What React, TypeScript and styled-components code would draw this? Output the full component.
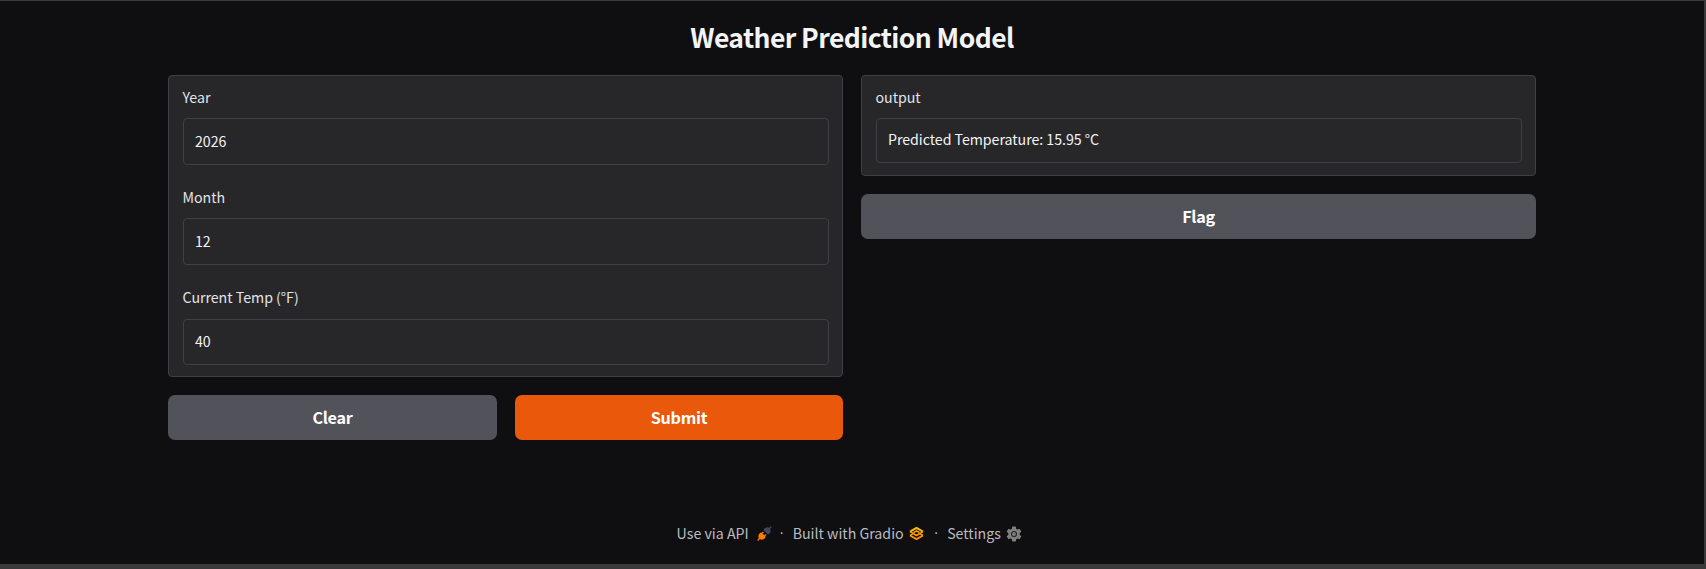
import React from "react";
import styled, { createGlobalStyle } from "styled-components";

const GlobalStyle = createGlobalStyle`
  *, *::before, *::after { box-sizing: border-box; }
  body {
    margin: 0;
    background: #0f0f11;
    color: #f4f4f5;
    font-family: "Noto Sans CJK SC", "Open Sans", sans-serif;
  }
  input, button { font-family: inherit; }
`;

const Page = styled.div`
  height: 569px;
  border: solid #3a3a3a;
  border-width: 1px 2px 5px 0;
  padding: 0 168px;
  display: flex;
  flex-direction: column;
`;

const Title = styled.h1`
  margin: 17px 0 19px;
  height: 38px;
  line-height: 38px;
  font-size: 26.5px;
  font-weight: 600;
  letter-spacing: -0.58px;
  text-align: center;
  color: #f4f4f5;
`;

const Columns = styled.main`
  display: grid;
  grid-template-columns: 675px 675px;
  gap: 18px;
  align-items: start;
`;

const Column = styled.section`
  display: flex;
  flex-direction: column;
  gap: 18px;
`;

const Panel = styled.div<{ $height: number }>`
  height: ${(p) => p.$height}px;
  padding: 10px 13px 0 14px;
  background: #27272a;
  border: 1px solid #3f3f46;
  border-radius: 4px;
`;

const Field = styled.label`
  display: flex;
  flex-direction: column;
  height: 100.2px;
`;

const FieldName = styled.span`
  height: 22px;
  margin: 0 0 10.2px -0.5px;
  line-height: 22px;
  font-size: 14.2px;
  letter-spacing: -0.02px;
  color: #e4e4e7;
`;

const TextInput = styled.input<{ $height: number; $lift?: number }>`
  width: 646px;
  height: ${(p) => p.$height}px;
  padding: 0 11px ${(p) => p.$lift ?? 1.2}px;
  background: #27272a;
  border: 1px solid #3f3f46;
  border-radius: 4px;
  color: #f4f4f5;
  font-size: 14.2px;
  letter-spacing: -0.04px;
  outline: none;
`;

const ButtonRow = styled.div`
  display: grid;
  grid-template-columns: 329px 328px;
  gap: 18px;
`;

const Button = styled.button<{ $primary?: boolean }>`
  height: 45px;
  padding: 0;
  border: 0;
  border-radius: 7px;
  background: ${(p) => (p.$primary ? "#ea580c" : "#52525b")};
  color: #fff;
  font-size: 16.2px;
  font-weight: 600;
  letter-spacing: -0.3px;
  line-height: 45px;
`;

const Footer = styled.footer`
  display: flex;
  justify-content: center;
  align-items: center;
  height: 24px;
  margin-top: 81px;
  margin-right: 5px;
  font-size: 14.2px;
  line-height: 24px;
  color: #bbbbc2;
`;

const FooterLink = styled.span<{ $gap: number }>`
  display: flex;
  align-items: center;
  gap: ${(p) => p.$gap}px;

  svg { position: relative; top: 0.5px; }
`;

const Dot = styled.span<{ $before: number }>`
  width: 4px;
  margin: 0 9px 0 ${(p) => p.$before}px;
  font-family: "Open Sans", sans-serif;
  text-align: center;
`;

const PlugIcon = () => (
  <svg width="15" height="15" viewBox="0 0 28 28">
    <path fill="#3f4758" d="M26.9425 2.94265C27.4632 2.42195 27.4632 1.57773 26.9425 1.05703C26.4218 0.536329 25.5776 0.536329 25.0569 1.05703L22.5713 3.54256C21.1213 2.59333 19.5367 2.43378 18.1753 2.64006C16.5495 2.88638 15.1127 3.66838 14.3905 4.39053L12.3905 6.39053C12.1405 6.64058 12 6.97972 12 7.33334C12 7.68697 12.1405 8.0261 12.3905 8.27615L19.7239 15.6095C20.2446 16.1302 21.0888 16.1302 21.6095 15.6095L23.6095 13.6095C24.3316 12.8873 25.1136 11.4505 25.36 9.82475C25.5663 8.46312 25.4066 6.87827 24.4571 5.42807L26.9425 2.94265Z" />
    <path fill="#ff7c00" d="M12.276 12.9426C12.7967 12.4219 12.7967 11.5777 12.276 11.057C11.7553 10.5363 10.9111 10.5363 10.3904 11.057L8.66651 12.7809L8.27615 12.3905C8.0261 12.1405 7.68697 12 7.33334 12C6.97972 12 6.64058 12.1405 6.39053 12.3905L4.39053 14.3905C3.66838 15.1127 2.88638 16.5495 2.64006 18.1753C2.43377 19.5367 2.59333 21.1214 3.54262 22.5714L1.05703 25.057C0.536329 25.5777 0.536329 26.4219 1.05703 26.9426C1.57773 27.4633 2.42195 27.4633 2.94265 26.9426L5.42817 24.4571C6.87835 25.4066 8.46315 25.5663 9.82475 25.36C11.4505 25.1136 12.8873 24.3316 13.6095 23.6095L15.6095 21.6095C16.1302 21.0888 16.1302 20.2446 15.6095 19.7239L15.2188 19.3332L16.9426 17.6093C17.4633 17.0886 17.4633 16.2444 16.9426 15.7237C16.4219 15.203 15.5777 15.203 15.057 15.7237L13.3332 17.4475L10.5521 14.6665L12.276 12.9426Z" />
  </svg>
);

const GradioIcon = () => (
  <svg width="15" height="15" viewBox="0 0 30 30" fill="none" strokeWidth="3.8" strokeLinejoin="round">
    <path stroke="#ff8c00" d="M2 19 15 26.3 28 19" />
    <path stroke="#ffba00" d="M2 11.2 15 3.7l13 7.5" />
    <path stroke="#ff9c00" strokeWidth="3" d="M2 11.2 15 19l13-7.8M2 19l5.5-3.2M28 19l-5.5-3.2" />
    <path stroke="#ffa800" strokeWidth="3" d="m9 13.2 6-3.6 6 3.6" />
  </svg>
);

const GearIcon = () => (
  <svg width="16" height="16" viewBox="0 0 32 32">
    <g fill="#808080">
      <circle cx="16" cy="16" r="11.5" />
      {[0, 60, 120].map((a) => (
        <rect key={a} x="12" y="1" width="8" height="30" rx="1.5" transform={`rotate(${a} 16 16)`} />
      ))}
    </g>
    <circle cx="16" cy="16" r="5" fill="#808080" stroke="#29292b" strokeWidth="2.4" />
  </svg>
);

const inputs = [
  { name: "Year", value: "2026" },
  { name: "Month", value: "12" },
  { name: "Current Temp (°F)", value: "40" },
];

export default function App() {
  return (
    <>
      <GlobalStyle />
      <Page>
        <Title>Weather Prediction Model</Title>
        <Columns>
          <Column>
            <Panel $height={302}>
              {inputs.map((f) => (
                <Field key={f.name}>
                  <FieldName>{f.name}</FieldName>
                  <TextInput $height={46.6} defaultValue={f.value} />
                </Field>
              ))}
            </Panel>
            <ButtonRow>
              <Button>Clear</Button>
              <Button $primary>Submit</Button>
            </ButtonRow>
          </Column>
          <Column>
            <Panel $height={101}>
              <Field>
                <FieldName>output</FieldName>
                <TextInput $height={45} $lift={3} readOnly value="Predicted Temperature: 15.95 °C" />
              </Field>
            </Panel>
            <Button>Flag</Button>
          </Column>
        </Columns>
        <Footer>
          <FooterLink $gap={8}>Use via API <PlugIcon /></FooterLink>
          <Dot $before={8}>·</Dot>
          <FooterLink $gap={5}>Built with Gradio <GradioIcon /></FooterLink>
          <Dot $before={10.5}>·</Dot>
          <FooterLink $gap={5.5}>Settings <GearIcon /></FooterLink>
        </Footer>
      </Page>
    </>
  );
}
